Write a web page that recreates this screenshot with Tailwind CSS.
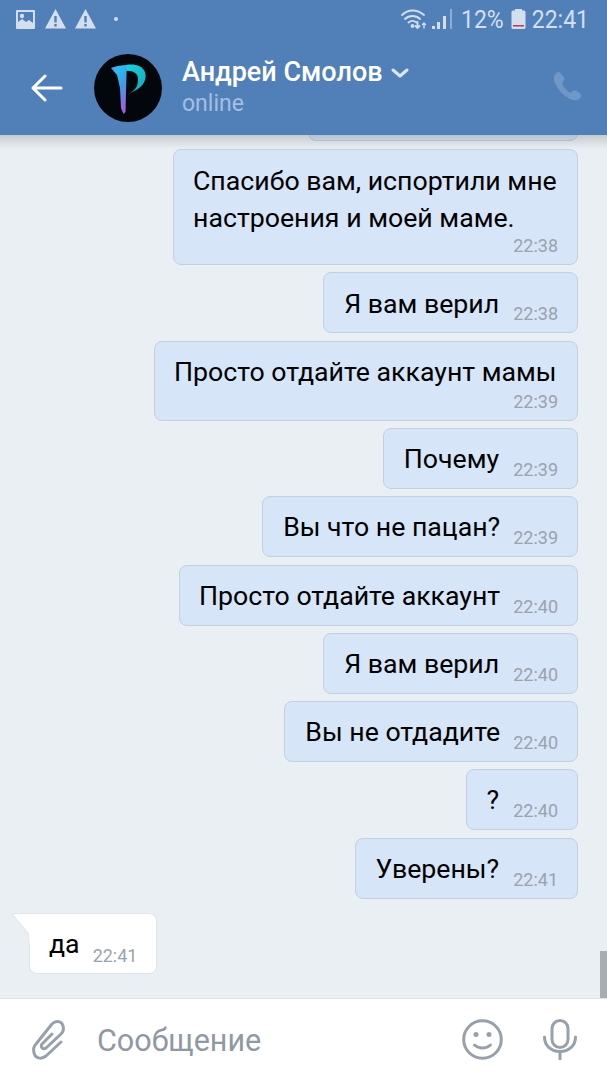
<!DOCTYPE html>
<html lang="ru">
<head>
  <meta charset="UTF-8">
  <meta name="viewport" content="width=device-width, initial-scale=1.0">
  <title>Андрей Смолов</title>
  <script src="https://cdn.jsdelivr.net/npm/@tailwindcss/browser@4"></script>
</head>
<body class="bg-[#eaeff4] font-['Roboto',sans-serif]">
  <div class="relative w-[607px] h-[1080px] flex flex-col overflow-hidden">

    <!-- Header -->
    <header class="relative z-10 h-[135px] shrink-0 bg-[#5180b9]">
      <!-- Status bar -->
      <div class="h-[38px] flex items-center justify-between pl-[15px] pr-[18px] text-[#d3dfee]">
        <div class="flex items-center gap-[9px]">
          <svg class="w-[21px] h-[21px]" viewBox="0 0 21 21"><path fill="#d3dfee" fill-rule="evenodd" d="M2 1h17a1 1 0 0 1 1 1v17a1 1 0 0 1-1 1H2a1 1 0 0 1-1-1V2a1 1 0 0 1 1-1zm1 2v10l4-3 4 3 3-2 4 3V3z"/><circle cx="7" cy="7" r="2.2" fill="#d3dfee"/></svg>
          <svg class="w-[21px] h-[20px]" viewBox="0 0 21 20"><path fill="#d3dfee" fill-rule="evenodd" d="M10.5 0 21 19.500H0zM9.300 7v6.500h2.400V7zm0 8v2.400h2.400V15z"/></svg>
          <svg class="w-[21px] h-[20px]" viewBox="0 0 21 20"><path fill="#d3dfee" fill-rule="evenodd" d="M10.5 0 21 19.500H0zM9.300 7v6.500h2.400V7zm0 8v2.400h2.400V15z"/></svg>
          <span class="w-[4px] h-[4px] ml-[9px] rounded-full bg-[#d3dfee]"></span>
        </div>
        <div class="flex items-center">
          <svg class="w-[26px] h-[21px]" viewBox="0 0 26 21" fill="none" stroke="#d3dfee" stroke-width="1.800" stroke-linecap="round"><path d="M1 6c6-6 15-6 22 0"/><path d="M4 10c4-4 11-4 15 0"/><path d="M7.500 13.500c2.500-2 5.500-2 8 0"/><circle cx="11.500" cy="17" r="1" fill="#d3dfee"/><path d="M16.500 13v6M14.500 17l2 2 2-2"/><path d="M23 19v-5M21.500 15.500 23 14l1.500 1.500" stroke-width="1.400"/></svg>
          <svg class="w-[21px] h-[20px] ml-[5px]" viewBox="0 0 21 20"><rect x="0" y="17" width="3" height="3" fill="#d3dfee"/><rect x="5" y="13" width="3" height="7" fill="#d3dfee"/><rect x="11" y="7" width="3" height="13" fill="#d3dfee"/><rect x="18" y="0" width="2" height="20" fill="#8fadd2"/></svg>
          <span class="ml-[8px] inline-block scale-y-110 text-[23px] leading-none">12%</span>
          <svg class="w-[15px] h-[20px] ml-[7px]" viewBox="0 0 15 20"><rect x="4" y="0" width="7" height="2" fill="#d3dfee"/><rect x="0.500" y="1.500" width="14" height="18.500" rx="1.500" fill="#d3dfee"/><rect x="2" y="16" width="11" height="1.500" fill="#c0394b"/></svg>
          <span class="ml-[6px] inline-block scale-y-110 text-[23px] leading-none">22:41</span>
        </div>
      </div>

      <!-- Toolbar -->
      <div class="flex items-start pl-[31px] pr-[24px]">
        <svg class="w-[32px] h-[28px] mt-[36px]" viewBox="0 0 32 28" fill="none" stroke="#fff" stroke-width="3" stroke-linecap="round" stroke-linejoin="round"><path d="M30 14H2M14 2 2 14l12 12"/></svg>
        <div class="relative w-[68px] h-[68px] ml-[31px] mt-[16px] rounded-full bg-[#03070b] overflow-hidden">
          <svg class="absolute inset-0" viewBox="0 0 68 68" fill="none">
            <defs>
              <linearGradient id="stem" x1="0" y1="0" x2="0.500" y2="1"><stop offset="0" stop-color="#9a6cf0"/><stop offset="0.22" stop-color="#28c0f0"/><stop offset="0.6" stop-color="#3f9be8"/><stop offset="1" stop-color="#9a62e0"/></linearGradient>
              <linearGradient id="bowl" x1="0" y1="0" x2="1" y2="1"><stop offset="0" stop-color="#18d8e8"/><stop offset="1" stop-color="#12a8b8"/></linearGradient>
            </defs>
            <path fill="url(#bowl)" d="M27 12c10-3 21-2 24 6 3 9-4 17-15 21 5-3 8-6 8-14 0-6-5-9-15-8z"/>
            <path fill="url(#stem)" d="M17 14c5-2 10-3 16-2l-.500 8-1 38-2 2-2.500-6-1-20-3-13z"/>
          </svg>
        </div>
        <div class="ml-[20px] mt-[16px]">
          <div class="flex items-center text-white text-[27px] leading-[36px] font-medium">
            Андрей Смолов
            <svg class="w-[18px] h-[10px] ml-[8px] mt-[2px]" viewBox="0 0 18 10" fill="none" stroke="#dce6f2" stroke-width="3" stroke-linecap="round" stroke-linejoin="round"><path d="M2 2l7 6 7-6"/></svg>
          </div>
          <div class="text-[#a4bfe0] text-[23px] leading-[26px] mt-[1px]">online</div>
        </div>
        <svg class="w-[30px] h-[30px] ml-auto mt-[33px]" viewBox="0 0 30 30"><path fill="#6f97c7" d="M7 1.500c-1-.8-2.500-.7-3.400.2L2 3.500C.5 5 .6 9 2.500 13c3 6.500 8 11.500 13.500 14.500 3.500 1.800 7.500 2.200 9.500.8l2-1.800c1-1 1-2.600 0-3.500l-4-3.200c-1-.8-2.200-.8-3.200 0l-2 1.500c-.6.400-1.400.4-2 0-3-2-5-4.500-7-8-.4-.7-.3-1.400.2-2l1.500-2c.7-1 .7-2.200 0-3.100z"/></svg>
      </div>
    </header>

    <!-- Messages -->
    <main class="relative flex-1 min-h-0 overflow-hidden flex flex-col justify-end items-end gap-[7.300px] pb-[24px] pr-[29px]">
      <div class="absolute z-10 top-0 left-0 right-0 h-[14px] bg-gradient-to-b from-black/15 to-transparent"></div>

      <div class="w-[270px] h-[60px] shrink-0 mb-[0.700px] rounded-[8px] bg-[#d6e5f7] border border-[#c2d0e0]"></div>

      <div class="shrink-0 w-[405px] h-[116px] rounded-[8px] bg-[#d6e5f7] border border-[#c2d0e0] pl-[19px] pr-[19px] pt-[12px] text-black text-[26.700px] leading-[38px]">
        <p class="whitespace-nowrap">Спасибо вам, испортили мне</p>
        <p class="whitespace-nowrap -mt-[1px]">настроения и моей маме.</p>
        <p class="text-right text-[18px] leading-[18px] text-[#9ba3ad]">22:38</p>
      </div>

      <div class="shrink-0 h-[61px] rounded-[8px] bg-[#d6e5f7] border border-[#c2d0e0] pl-[20px] pr-[19px] flex items-start text-black text-[26.700px] leading-[38px]">
        <span class="mt-[12px] whitespace-nowrap">Я вам верил</span>
        <span class="ml-[14px] mt-[30px] text-[18px] leading-[22px] text-[#9ba3ad]">22:38</span>
      </div>

      <div class="shrink-0 w-[424px] h-[80px] rounded-[8px] bg-[#d6e5f7] border border-[#c2d0e0] pl-[19px] pr-[19px] pt-[11px] text-black text-[26.700px] leading-[38px]">
        <p class="whitespace-nowrap">Просто отдайте аккаунт мамы</p>
        <p class="text-right text-[18px] leading-[18px] text-[#9ba3ad] mt-[2px]">22:39</p>
      </div>

      <div class="shrink-0 h-[61px] rounded-[8px] bg-[#d6e5f7] border border-[#c2d0e0] pl-[20px] pr-[19px] flex items-start text-black text-[26.700px] leading-[38px]">
        <span class="mt-[11px] whitespace-nowrap">Почему</span>
        <span class="ml-[14px] mt-[30px] text-[18px] leading-[22px] text-[#9ba3ad]">22:39</span>
      </div>

      <div class="shrink-0 h-[61px] rounded-[8px] bg-[#d6e5f7] border border-[#c2d0e0] pl-[20px] pr-[19px] flex items-start text-black text-[26.700px] leading-[38px]">
        <span class="mt-[11px] whitespace-nowrap">Вы что не пацан?</span>
        <span class="ml-[13px] mt-[30px] text-[18px] leading-[22px] text-[#9ba3ad]">22:39</span>
      </div>

      <div class="shrink-0 h-[61px] rounded-[8px] bg-[#d6e5f7] border border-[#c2d0e0] pl-[19px] pr-[19px] flex items-start text-black text-[26.700px] leading-[38px]">
        <span class="mt-[11px] whitespace-nowrap">Просто отдайте аккаунт</span>
        <span class="ml-[13px] mt-[30px] text-[18px] leading-[22px] text-[#9ba3ad]">22:40</span>
      </div>

      <div class="shrink-0 h-[61px] rounded-[8px] bg-[#d6e5f7] border border-[#c2d0e0] pl-[20px] pr-[19px] flex items-start text-black text-[26.700px] leading-[38px]">
        <span class="mt-[11px] whitespace-nowrap">Я вам верил</span>
        <span class="ml-[14px] mt-[30px] text-[18px] leading-[22px] text-[#9ba3ad]">22:40</span>
      </div>

      <div class="shrink-0 h-[61px] rounded-[8px] bg-[#d6e5f7] border border-[#c2d0e0] pl-[20px] pr-[19px] flex items-start text-black text-[26.700px] leading-[38px]">
        <span class="mt-[11px] whitespace-nowrap">Вы не отдадите</span>
        <span class="ml-[13px] mt-[30px] text-[18px] leading-[22px] text-[#9ba3ad]">22:40</span>
      </div>

      <div class="shrink-0 h-[61px] rounded-[8px] bg-[#d6e5f7] border border-[#c2d0e0] pl-[20px] pr-[19px] flex items-start text-black text-[26.700px] leading-[38px]">
        <span class="mt-[11px] whitespace-nowrap">?</span>
        <span class="ml-[14px] mt-[30px] text-[18px] leading-[22px] text-[#9ba3ad]">22:40</span>
      </div>

      <div class="shrink-0 h-[61px] rounded-[8px] bg-[#d6e5f7] border border-[#c2d0e0] pl-[20px] pr-[19px] flex items-start text-black text-[26.700px] leading-[38px]">
        <span class="mt-[11px] whitespace-nowrap">Уверены?</span>
        <span class="ml-[14px] mt-[30px] text-[18px] leading-[22px] text-[#9ba3ad]">22:41</span>
      </div>

      <!-- Incoming -->
      <div class="relative shrink-0 self-start ml-[29px] mt-[7px] h-[61px] w-[128px] rounded-[8px] rounded-tl-none bg-white border border-[#dfe4ea] flex items-start pl-[19px] text-black text-[26.700px] leading-[38px]">
        <svg class="absolute -left-[18px] -top-[1px] w-[19px] h-[30px]" viewBox="0 0 19 30"><path fill="#fff" stroke="#dfe4ea" d="M19 .5H1.500Q0 .5 1 2L16 20q1 1.500 1 3v7h2z"/><path fill="#fff" d="M17.500 1h2v29h-2z"/></svg>
        <span class="mt-[11px]">да</span>
        <span class="ml-[13px] mt-[31px] text-[18px] leading-[22px] text-[#9ba3ad]">22:41</span>
      </div>

      <div class="absolute right-0 bottom-0 w-[7px] h-[47px] bg-[#a9adb1]"></div>
    </main>

    <!-- Input bar -->
    <footer class="h-[82px] shrink-0 bg-white border-t border-[#dde2e8] flex items-start pl-[31px] pr-[30px]">
      <svg class="w-[34px] h-[39px] mt-[21px] overflow-visible" viewBox="0 0 34 39" fill="none" stroke="#98a1aa" stroke-width="3" stroke-linecap="round" stroke-linejoin="round"><path d="M30 22 15 36C10 40 4 38 3 33 2 29 3 26 5 24L21 4C25 0 31 1 32 6 33 9 32 12 30 14L15 28C12 30 9 27 11 24L21 14"/></svg>
      <span class="ml-[32px] mt-[23px] text-[#8f98a3] text-[30.500px] leading-[38px]">Сообщение</span>
      <svg class="w-[41px] h-[41px] ml-auto mt-[20px]" viewBox="0 0 41 41" fill="none" stroke="#98a1aa" stroke-width="3" stroke-linecap="round"><circle cx="20.500" cy="20.500" r="18.800"/><path d="M12.500 26c4.500 4 11.500 4 16 0"/><circle cx="14" cy="15.500" r="2.500" fill="#98a1aa" stroke="none"/><circle cx="27" cy="15.500" r="2.500" fill="#98a1aa" stroke="none"/></svg>
      <svg class="w-[34px] h-[41px] ml-[40px] mt-[20px]" viewBox="0 0 34 41" fill="none" stroke="#98a1aa" stroke-width="3" stroke-linecap="round"><rect x="9" y="1.500" width="16" height="27" rx="8"/><path d="M1.500 18c0 9 7 14.500 15.500 14.500S32.500 27 32.500 18"/><path d="M17 33v7"/></svg>
    </footer>
  </div>
</body>
</html>
